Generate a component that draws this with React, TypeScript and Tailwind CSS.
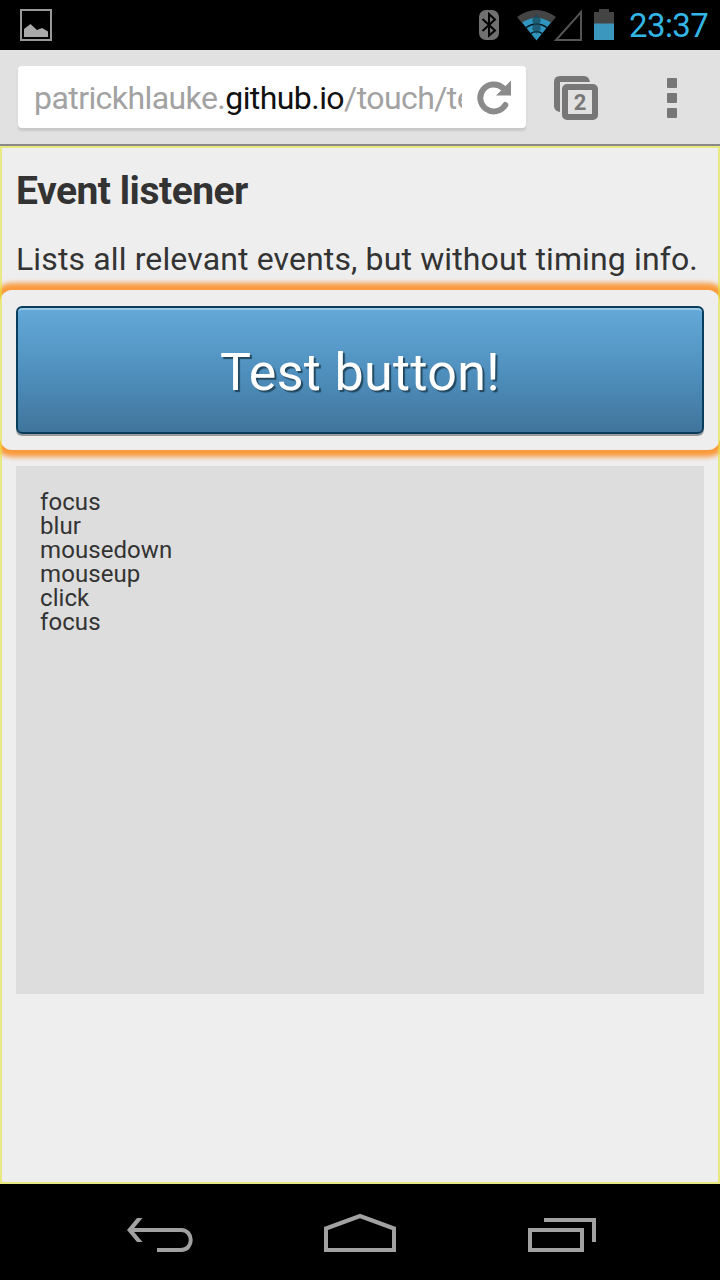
import React from "react";

const events = ["focus", "blur", "mousedown", "mouseup", "click", "focus"];

function StatusBar() {
  return (
    <header className="flex h-[50px] shrink-0 items-center bg-black">
      <svg className="ml-5 block" width="32" height="32" viewBox="0 0 32 32" fill="none">
        <rect x="1" y="1" width="30" height="30" stroke="#999" strokeWidth="2" />
        <path d="M4 28V20L10.500 15L17 21L22 19L28 22.500V28Z" fill="#aaa" />
      </svg>
      <svg className="ml-auto block" width="138" height="34" viewBox="478 8 138 34" fill="none">
        <rect x="479" y="10" width="20" height="30" rx="7" fill="#707070" />
        <path d="M482.500 19L495 30.500L489 35.500V14L495 19.500L482.500 31" stroke="#000" strokeWidth="2" />
        <path d="M517 17Q536.500 3 556 17L551 23Q536.500 13 522 23Z" fill="#444" />
        <path d="M522 22.500Q536.500 13 551 22.500L536.500 40.500Z" fill="#3096c0" />
        <path d="M525.500 28Q536.500 20 547.500 28M530 34Q536.500 29 543 34" stroke="#04161e" strokeWidth="1.500" />
        <path d="M536.500 14L541 20L539.500 24L541 29L536.500 34L532 29L533.500 24L532 20Z" fill="#174a5e" opacity=".75" />
        <path d="M581 12V40H556Z" stroke="#555" strokeWidth="2" />
        <path d="M594 12H599V9H609V12H614V24H594Z" fill="#444" />
        <rect x="594" y="23.500" width="20" height="16.500" fill="#3b97bd" />
      </svg>
      <time className="mr-3 ml-[13px] w-[79px] pt-0.5 text-[33px] leading-[50px] tracking-[-0.600px] whitespace-nowrap text-[#33b5e5]">23:37</time>
    </header>
  );
}

function Toolbar() {
  return (
    <div className="flex h-24 shrink-0 items-start border-b-2 border-[#888] bg-[#e1e1e1] pt-4 pl-[18px]">
      <div className="flex h-[62px] w-[508px] items-center rounded bg-white pl-4 shadow-[0_3px_2px_#c8c8c8]">
        <div className="w-[428px] overflow-hidden pt-px text-[32px] leading-[62px] tracking-[-0.570px] whitespace-nowrap text-[#a2a2a2]">
          patrickhlauke.<span className="text-[#111]">github.io</span>/touch/te
        </div>
        <svg className="ml-[14px] block" width="36" height="36" viewBox="476 80 36 36" fill="none">
          <path d="M505.300 106A13.500 13.500 0 1 1 503 89" stroke="#8b8b8b" strokeWidth="6" strokeLinecap="round" />
          <path d="M511 81.500V96.500H496Z" fill="#8b8b8b" />
        </svg>
      </div>
      <svg className="mt-2 ml-7 block" width="46" height="48" viewBox="554 74 46 48" fill="none">
        <path d="M554 82Q554 76 560 76H584Q589 76 590 82H560V112Q554 111 554 106Z" fill="#777" />
        <rect x="565" y="87" width="30" height="30" rx="2" stroke="#777" strokeWidth="6" />
        <text x="580" y="110" textAnchor="middle" fill="#777" fontSize="22" fontWeight="700" fontFamily="Roboto, sans-serif">2</text>
      </svg>
      <div className="mt-3 ml-[67px] flex flex-col gap-[5px]">
        <i className="size-[10px] rounded-[1px] bg-[#777]" />
        <i className="size-[10px] rounded-[1px] bg-[#777]" />
        <i className="size-[10px] rounded-[1px] bg-[#777]" />
      </div>
    </div>
  );
}

function NavigationBar() {
  return (
    <nav className="flex h-24 shrink-0 items-center bg-black text-[#a1a1a1]">
      <svg className="ml-[126px] block" width="70" height="48" viewBox="126 1208 70 48" fill="none" stroke="currentColor" strokeWidth="4">
        <path d="M131 1230H181C194 1230 194 1250 181 1250H157" />
        <path d="M137 1218H142.500L132.500 1230L142.500 1242H137L127 1230Z" fill="currentColor" stroke="none" />
      </svg>
      <svg className="ml-[126px] block" width="76" height="48" viewBox="322 1208 76 48" fill="none" stroke="currentColor" strokeWidth="4">
        <path d="M326 1250V1228.500L360 1216L394 1228.500V1250Z" />
      </svg>
      <svg className="ml-[128px] block" width="72" height="48" viewBox="526 1208 72 48" fill="none" stroke="currentColor" strokeWidth="4">
        <path d="M530 1230H582V1250H530ZM544 1220H594V1242" />
      </svg>
    </nav>
  );
}

export default function App() {
  return (
    <div className="flex h-[1280px] w-[720px] flex-col overflow-hidden bg-black font-['Roboto',sans-serif]">
      <StatusBar />
      <Toolbar />
      <main className="relative h-[1038px] shrink-0 overflow-hidden bg-[#eee] text-[#333]">
        <h1 className="mx-4 h-[68px] pt-[21px] text-[39px] leading-[48px] font-bold tracking-[-0.500px] whitespace-nowrap">Event listener</h1>
        <p className="mx-4 h-[76px] pt-5 text-[32px] leading-[50px] tracking-[0.130px] whitespace-nowrap">Lists all relevant events, but without timing info.</p>
        <section className="h-40 rounded-xl bg-[#eee] p-4 shadow-[0_0_5px_7px_#fa9a3c]">
          <button className="block h-32 w-full rounded-md border-2 border-[#0a3d5c] bg-linear-to-b from-[#64a9d8] via-[#4e8ebc] via-55% to-[#40759b] pt-1.5 text-[52px] leading-none tracking-[0.350px] text-white shadow-[inset_0_2px_0_#9bc8e6,0_2px_0_#999] [text-shadow:2px_2px_1px_#22485f]">
            Test button!
          </button>
        </section>
        <output className="mx-4 mt-4 block h-[528px] bg-[#ddd] p-6 text-2xl leading-6 tracking-[0.080px]">
          {events.map((event, index) => (
            <div key={index}>{event}</div>
          ))}
        </output>
        <div className="pointer-events-none absolute inset-0 border-2 border-[#e6e63c]/60" />
      </main>
      <NavigationBar />
    </div>
  );
}
